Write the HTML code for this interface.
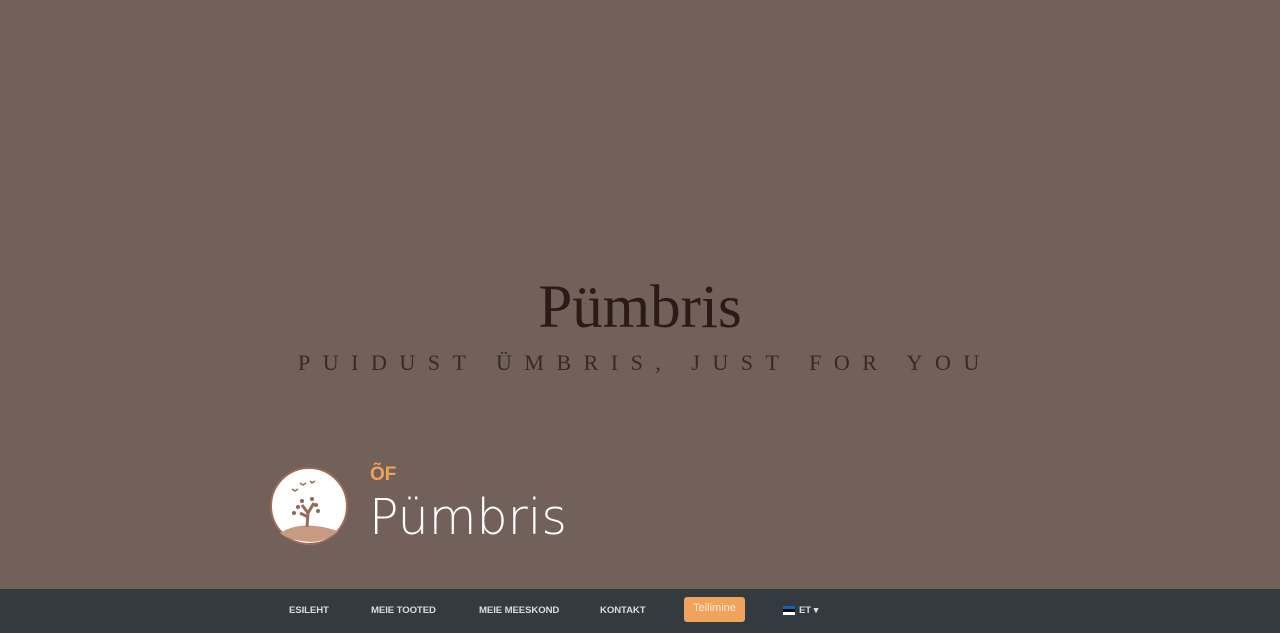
<!DOCTYPE html>
<html><head><meta charset="utf-8"><style>
body{margin:0;width:1280px;height:633px;background:#72615a;position:relative;overflow:hidden;font-family:"Liberation Sans",sans-serif}
.t{position:absolute;left:0;width:1280px;text-align:center;top:270px;font-family:"Liberation Serif",serif;font-size:61px;color:#2b1a16;line-height:76px}
.s{position:absolute;left:298px;top:350px;font-family:"Liberation Serif",serif;font-size:22px;letter-spacing:12.5px;color:#3a2824;white-space:nowrap}
.c{position:absolute;left:270px;top:467px;width:74px;height:74px;border-radius:50%;background:#fff;border:2px solid #a06a55}
.of{position:absolute;left:370px;top:464px;font-weight:bold;font-size:19px;color:#f0a25a}
.p{position:absolute;left:369px;top:483px;font-size:49px;color:#fff;line-height:70px;font-family:"DejaVu Sans",sans-serif;font-weight:200}
.nav{position:absolute;left:0;top:589px;width:1280px;height:44px;background:#333a40}
.nav span{position:absolute;top:16px;font-size:9.6px;font-weight:bold;color:#dcdcdc;letter-spacing:-0.1px}
.b{position:absolute;left:684px;top:8px;width:61px;height:25px;background:#f0a35b;border-radius:3px;color:#fbe7d4;font-size:11px;text-align:center;line-height:23px}
</style></head><body>
<div class="t">Pümbris</div>
<div class="s">PUIDUST ÜMBRIS, JUST FOR YOU</div>
<div class="c"><svg width="74" height="74" viewBox="0 0 74 74">
<path d="M8 64 Q30 50 66 62 Q50 76 30 72 Q15 70 8 64Z" fill="#c99a82"/>
<path d="M35 58 L36 44 L30 36 M36 44 L42 34 M36 48 L28 44" stroke="#9b6a56" stroke-width="3" fill="none"/>
<g fill="#8a6a5a"><circle cx="26" cy="38" r="2"/><circle cx="30" cy="32" r="2"/><circle cx="40" cy="30" r="2"/><circle cx="44" cy="36" r="2"/><circle cx="22" cy="44" r="2"/><circle cx="46" cy="42" r="2"/></g>
<path d="M20 20 l3 2 l3 -2 M28 14 l3 2 l3 -2 M38 12 l2 2 l3 -2" stroke="#9b6a56" stroke-width="1.5" fill="none"/>
</svg></div>
<div class="of">ÕF</div>
<div class="p">Pümbris</div>
<div class="nav">
<span style="left:289px">ESILEHT</span>
<span style="left:371px">MEIE TOOTED</span>
<span style="left:479px">MEIE MEESKOND</span>
<span style="left:600px">KONTAKT</span>
<div class="b">Tellimine</div>
<div style="position:absolute;left:783px;top:17px;width:12px;height:9px;background:linear-gradient(#1a5fb4 33%,#111 33% 66%,#fff 66%)"></div>
<span style="left:799px">ET ▾</span>
</div>
</body></html>
